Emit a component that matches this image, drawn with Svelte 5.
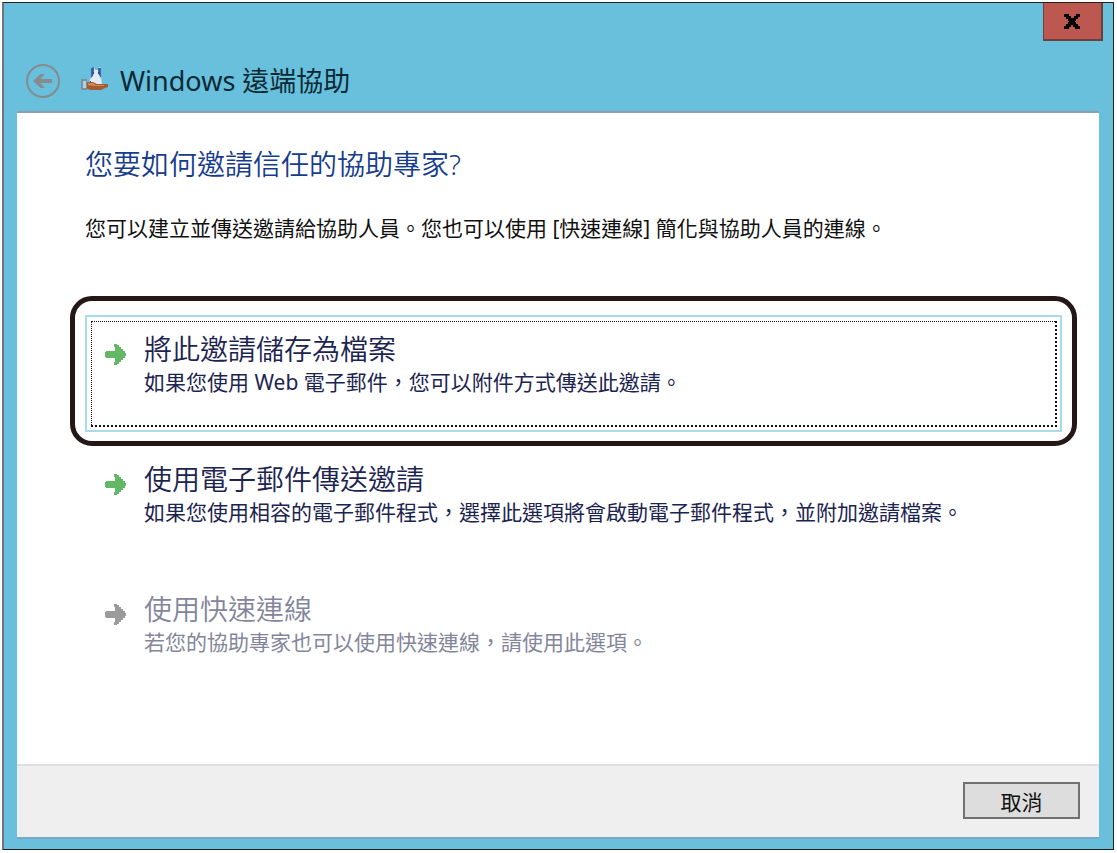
<script>
  const options = [
    {
      title: '將此邀請儲存為檔案',
      text: '如果您使用 Web 電子郵件，您可以附件方式傳送此邀請。',
      focused: true,
      disabled: false,
    },
    {
      title: '使用電子郵件傳送邀請',
      text: '如果您使用相容的電子郵件程式，選擇此選項將會啟動電子郵件程式，並附加邀請檔案。',
      focused: false,
      disabled: false,
    },
    {
      title: '使用快速連線',
      text: '若您的協助專家也可以使用快速連線，請使用此選項。',
      focused: false,
      disabled: true,
    },
  ];
</script>

<div class="window">
  <header>
    <button class="close" aria-label="關閉">
      <svg width="17" height="15" viewBox="0 0 17 15">
        <path d="M0 0h5v2h2v2h3V2h2V0h4v3h-2v2h-2v2h-1v1h1v2h2v2h2v3h-5v-2h-2v-2H7v2H5v2H0v-3h2v-2h2V8h1V7H4V5H2V3H0z" />
      </svg>
    </button>

    <div class="caption">
      <button class="back" aria-label="上一步" disabled>
        <svg width="36" height="36" viewBox="0 0 36 36" fill="none" stroke="#858c8f">
          <circle cx="18" cy="18" r="16" stroke-width="2" />
          <path d="M27 18H12" stroke-width="4" />
          <path d="M19 11.500h-3.500L8.500 18l7 6.500H19L13 18z" fill="#858c8f" stroke-width="1" />
        </svg>
      </button>
      <svg class="app-icon" width="28" height="24" viewBox="0 0 28 24">
        <path d="M8 17L10 10V1l3-1 1 3h3l1-3 2 1v9l1 7z" fill="#e4eaf3" />
        <path d="M10 1l3-1v4l-1 5-2 2zM17 1l3 0v10l-2-3-1-4z" fill="#3c62a5" />
        <path d="M12 5h1v2h-1zM17 5h1v2h-1zM9 14h1l-1 3H8z" fill="#27406f" />
        <path d="M0 12h6v11H0z" fill="#7c929c" />
        <path d="M2 14h3v7H2z" fill="#a9d5e3" />
        <path d="M6 15h6l4 2h11v3l-3 1-4 2H10l-4-1z" fill="#a65c33" />
        <path d="M7 16h5l3 2h8v1H12l-5-1z" fill="#d08a5a" />
      </svg>
      <h1>Windows 遠端協助</h1>
    </div>
  </header>

  <div class="page">
    <main>
      <h2>您要如何邀請信任的協助專家?</h2>
      <p class="intro">您可以建立並傳送邀請給協助人員。您也可以使用 [快速連線] 簡化與協助人員的連線。</p>

      <div class="options">
        {#each options as option}
          <div class:callout={option.focused}>
            <button class="option" class:focused={option.focused} disabled={option.disabled}>
              <svg class="arrow" width="21" height="21" viewBox="0 0 21 21">
                <path d="M9 0h3v1h2v2h2v2h2v2h2v2h1v3h-1v2h-2v2h-2v2h-2v2h-2v1H9v-3h1v-4H1v-1H0V8h1V7h9V3H9z" />
              </svg>
              <span class="label">
                <span class="title">{option.title}</span>
                <span class="text">{option.text}</span>
              </span>
            </button>
          </div>
        {/each}
      </div>
    </main>

    <footer>
      <button class="cancel">取消</button>
    </footer>
  </div>
</div>

<style>
  :global(body) {
    background: #fff;
  }

  .window {
    display: flex;
    flex-direction: column;
    box-sizing: border-box;
    min-height: calc(100vh - 5px);
    margin: 2px 3px 3px 2px;
    padding: 0 14px 10px 13px;
    border: 1px solid #231f20;
    border-left: 2px solid #6e7679;
    background: #69c0dc;
    font-family: 'Noto Sans', 'Noto Sans CJK TC', sans-serif;
  }

  button {
    font-family: inherit;
    border-radius: 0;
  }

  header {
    display: flex;
    flex-direction: column;
  }

  .close {
    align-self: flex-end;
    display: flex;
    align-items: center;
    justify-content: center;
    width: 60px;
    height: 38px;
    margin-right: -4px;
    padding: 0;
    border: 1px solid #69403c;
    border-width: 0 2px 2px 1px;
    background: #bc5850;
  }

  .caption {
    display: flex;
    align-items: center;
    height: 36px;
    margin: 22px 0 12px 8px;
  }

  .back {
    display: flex;
    padding: 0;
    border: none;
    background: none;
  }

  .app-icon {
    margin: 0 11px 4px 20px;
  }

  h1 {
    margin: 0;
    font-size: 27px;
    line-height: 36px;
    font-weight: 400;
    color: #0b2a35;
  }

  .page {
    flex: 1;
    display: flex;
    flex-direction: column;
    border-top: 2px solid #8a9fb0;
    border-bottom: 2px solid #7ba7c4;
    background: #fff;
  }

  main {
    flex: 1;
    padding: 31px 37px 60px 68px;
  }

  h2 {
    margin: 0 0 28px;
    font-size: 28px;
    line-height: 40px;
    font-weight: 350;
    color: #163c8c;
  }

  .intro {
    margin: 0 0 71px;
    font-size: 21px;
    line-height: 32px;
    color: #111;
  }

  .options {
    display: flex;
    flex-direction: column;
    gap: 13px;
  }

  .callout {
    margin: -19px -15px -14px;
    padding: 14px 10px 9px;
    border: 5px solid #231815;
    border-radius: 22px;
  }

  .option {
    position: relative;
    display: flex;
    align-items: flex-start;
    gap: 18px;
    box-sizing: border-box;
    width: 100%;
    min-height: 117px;
    padding: 14px 18px;
    border: 2px solid transparent;
    background: none;
    text-align: left;
    color: #1c2450;
  }

  .option.focused {
    border-color: #a9dbea;
  }

  .option.focused::after {
    content: '';
    position: absolute;
    inset: 4px 3px 3px 4px;
    border: 1px dotted #111;
    border-width: 1px 2px 2px 1px;
  }

  .arrow {
    flex: none;
    margin-top: 13px;
    fill: #62b865;
  }

  .label {
    display: flex;
    flex-direction: column;
  }

  .title {
    font-size: 28px;
    line-height: 36px;
    font-weight: 350;
  }

  .text {
    font-size: 21px;
    line-height: 30px;
  }

  .option:disabled {
    color: #83869b;
  }

  .option:disabled .arrow {
    fill: #9b9b9b;
  }

  footer {
    display: flex;
    justify-content: flex-end;
    padding: 16px 19px 18px;
    border-top: 2px solid #dfdfdf;
    background: #efefef;
  }

  .cancel {
    width: 117px;
    height: 37px;
    padding: 0;
    border: 2px solid #707072;
    background: #dddddd;
    font-size: 21px;
    color: #111;
  }
</style>
